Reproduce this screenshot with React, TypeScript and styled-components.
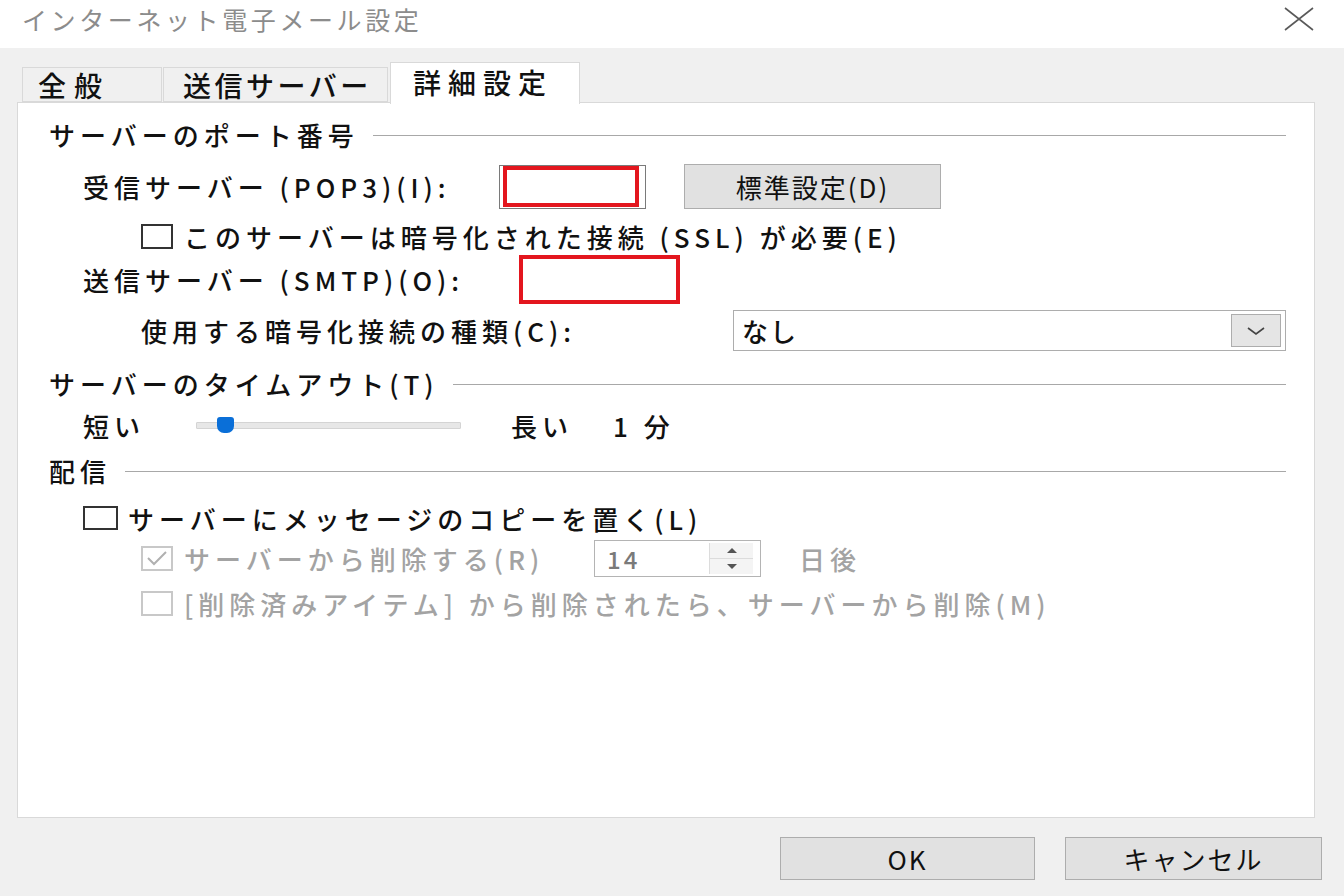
import React from "react";
import styled, { createGlobalStyle } from "styled-components";

const GlobalStyle = createGlobalStyle`
  html, body { margin: 0; padding: 0; }
  body {
    background: #f0f0f0;
    font-family: "Noto Sans CJK JP", "Noto Sans", sans-serif;
    color: #111;
  }
  * { box-sizing: border-box; }
`;

const Window = styled.div`
  width: 1344px;
  height: 896px;
  display: flex;
  flex-direction: column;
  background: #f0f0f0;
  overflow: hidden;
`;

const TitleBar = styled.div`
  height: 48px;
  background: #ffffff;
  display: flex;
  align-items: center;
  justify-content: space-between;
  padding: 0 30px 10px 22px;
`;

const Title = styled.div`
  font-size: 25px;
  letter-spacing: 3.6px;
  color: #8c8c8c;
  line-height: 1;
`;

const CloseIcon = styled.svg`
  width: 30px;
  height: 24px;
  display: block;
`;

const Body = styled.div`
  flex: 1;
  display: flex;
  flex-direction: column;
  padding: 14px 29px 0 17px;
`;

const TabStrip = styled.div`
  display: flex;
  align-items: flex-end;
  height: 40px;
  padding-left: 5px;
  position: relative;
  z-index: 1;
`;

const Tab = styled.div<{ $w: number; $ls: number; $pl: number; $active?: boolean }>`
  width: ${(p) => p.$w}px;
  height: ${(p) => (p.$active ? 42 : 35)}px;
  margin-bottom: ${(p) => (p.$active ? -2 : 0)}px;
  margin-left: ${(p) => (p.$active ? 2 : 1)}px;
  background: ${(p) => (p.$active ? "#ffffff" : "#f0f0f0")};
  border: 1px solid #d9d9d9;
  border-bottom: ${(p) => (p.$active ? "none" : "1px solid #d9d9d9")};
  display: flex;
  align-items: center;
  justify-content: flex-start;
  padding-left: ${(p) => p.$pl}px;
  font-size: 28px;
  font-weight: 500;
  letter-spacing: ${(p) => p.$ls}px;
  color: #111;
  padding-bottom: ${(p) => (p.$active ? 4 : 0)}px;
  white-space: nowrap;
  &:first-child { margin-left: 0; }
`;

const Panel = styled.div`
  height: 716px;
  background: #ffffff;
  border: 1px solid #d9d9d9;
  padding: 13px 28px 0 31px;
  display: flex;
  flex-direction: column;
`;

const SectionHeader = styled.div<{ $mt: number }>`
  height: 36px;
  margin-top: ${(p) => p.$mt}px;
  display: flex;
  align-items: center;
  gap: 14px;
  font-size: 26px;
  font-weight: 500;
  letter-spacing: 5px;
  white-space: nowrap;
`;

const Rule = styled.div`
  flex: 1;
  height: 1px;
  background: #a8a8a8;
  margin-top: 2px;
`;

const Row = styled.div<{ $mt: number; $h: number; $indent: number; $disabled?: boolean }>`
  height: ${(p) => p.$h}px;
  margin-top: ${(p) => p.$mt}px;
  padding-left: ${(p) => p.$indent}px;
  display: flex;
  align-items: center;
  font-size: 26px;
  font-weight: 500;
  letter-spacing: 5px;
  white-space: nowrap;
  color: ${(p) => (p.$disabled ? "#a3a3a3" : "#111")};
`;

const Label = styled.div<{ $w?: number }>`
  width: ${(p) => (p.$w ? `${p.$w}px` : "auto")};
  flex-shrink: 0;
`;

const TextBox = styled.div`
  width: 147px;
  height: 44px;
  border: 1px solid #7a7a7a;
  background: #fff;
  padding: 0 6px 2px 3px;
  display: flex;
`;

const RedMark = styled.div<{ $w: number; $h: number }>`
  width: ${(p) => p.$w}px;
  height: ${(p) => p.$h}px;
  border: 4px solid #e3161e;
  flex-shrink: 0;
`;

const Button = styled.div<{ $w: number; $h: number }>`
  width: ${(p) => p.$w}px;
  height: ${(p) => p.$h}px;
  background: #e1e1e1;
  border: 1px solid #adadad;
  display: flex;
  align-items: center;
  justify-content: center;
  font-size: 26px;
  font-weight: 400;
  letter-spacing: 2px;
  color: #111;
  flex-shrink: 0;
`;

const CheckBox = styled.div<{ $w: number; $h: number; $disabled?: boolean }>`
  width: ${(p) => p.$w}px;
  height: ${(p) => p.$h}px;
  border: 2px solid ${(p) => (p.$disabled ? "#c8c8c8" : "#333333")};
  background: #fff;
  flex-shrink: 0;
  display: flex;
  align-items: center;
  justify-content: center;
  margin-right: ${(p) => (p.$w > 33 ? 10 : 11)}px;
`;

const Select = styled.div`
  width: 558px;
  height: 41px;
  border: 1px solid #adadad;
  background: #fff;
  display: flex;
  align-items: center;
  justify-content: space-between;
  padding: 0 4px 0 8px;
  font-size: 26px;
  letter-spacing: 2px;
`;

const SelectArrow = styled.div`
  width: 50px;
  height: 33px;
  background: #e5e5e5;
  border: 1px solid #adadad;
  display: flex;
  align-items: center;
  justify-content: center;
`;

const SliderTrack = styled.div`
  width: 265px;
  height: 7px;
  margin-right: 50px;
  background: #e7e7e7;
  border: 1px solid #d4d4d4;
  border-radius: 1px;
  position: relative;
`;

const SliderThumb = styled.div`
  position: absolute;
  left: 20px;
  top: -6px;
  width: 17px;
  height: 16px;
  background: #0a6fd8;
  border-radius: 3px 3px 7px 7px;
`;

const Spinner = styled.div`
  width: 167px;
  height: 37px;
  margin-right: 38px;
  border: 1px solid #b4b4b4;
  background: #fff;
  display: flex;
  align-items: center;
  justify-content: space-between;
  padding: 2px 7px 2px 12px;
  font-size: 24px;
  letter-spacing: 3px;
  color: #7a7a7a;
`;

const SpinButtons = styled.div`
  width: 44px;
  height: 100%;
  display: flex;
  flex-direction: column;
  border-left: 1px solid #dcdcdc;
`;

const SpinHalf = styled.div<{ $top?: boolean }>`
  flex: 1;
  display: flex;
  align-items: center;
  justify-content: center;
  background: #f4f4f4;
  border-bottom: ${(p) => (p.$top ? "1px solid #dcdcdc" : "none")};
`;

const Footer = styled.div`
  display: flex;
  justify-content: flex-end;
  gap: 30px;
  padding: 19px 0 0 0;
  margin-right: -7px;
`;

const Gap = styled.div<{ $w: number }>`
  width: ${(p) => p.$w}px;
  flex-shrink: 0;
`;

const Check = ({ color }: { color: string }) => (
  <svg width="22" height="16" viewBox="0 0 22 16">
    <path d="M2 8 L8 14 L20 2" fill="none" stroke={color} strokeWidth="2" />
  </svg>
);

export default function App() {
  return (
    <>
      <GlobalStyle />
      <Window>
        <TitleBar>
          <Title>インターネット電子メール設定</Title>
          <CloseIcon viewBox="0 0 30 24">
            <path d="M1 1 L29 23 M29 1 L1 23" stroke="#5a5a5a" strokeWidth="1.6" fill="none" />
          </CloseIcon>
        </TitleBar>
        <Body>
          <TabStrip>
            <Tab $w={140} $ls={8} $pl={15}>全般</Tab>
            <Tab $w={225} $ls={3.5} $pl={19}>送信サーバー</Tab>
            <Tab $w={190} $ls={7} $pl={22} $active>詳細設定</Tab>
          </TabStrip>
          <Panel>
            <SectionHeader $mt={0}>
              サーバーのポート番号
              <Rule />
            </SectionHeader>

            <Row $mt={12} $h={45} $indent={34}>
              <Label $w={416}>受信サーバー (POP3)(I):</Label>
              <TextBox>
                <RedMark $w={136} $h={41} />
              </TextBox>
              <Gap $w={38} />
              <Button $w={257} $h={45}>標準設定(D)</Button>
            </Row>

            <Row $mt={13} $h={28} $indent={92}>
              <CheckBox $w={32} $h={25} />
              <Label>このサーバーは暗号化された接続 (SSL) が必要(E)</Label>
            </Row>

            <Row $mt={3} $h={52} $indent={34}>
              <Label $w={436}>送信サーバー (SMTP)(O):</Label>
              <RedMark $w={161} $h={49} />
            </Row>

            <Row $mt={5} $h={41} $indent={92}>
              <Label $w={592}>使用する暗号化接続の種類(C):</Label>
              <Select>
                なし
                <SelectArrow>
                  <svg width="20" height="10" viewBox="0 0 20 10">
                    <path d="M2 2 L10 8 L18 2" fill="none" stroke="#444" strokeWidth="1.6" />
                  </svg>
                </SelectArrow>
              </Select>
            </Row>

            <SectionHeader $mt={14}>
              サーバーのタイムアウト(T)
              <Rule />
            </SectionHeader>

            <Row $mt={8} $h={32} $indent={34}>
              <Label $w={113}>短い</Label>
              <SliderTrack>
                <SliderThumb />
              </SliderTrack>
              <Label $w={102}>長い</Label>
              <Label>1 分</Label>
            </Row>

            <SectionHeader $mt={11}>
              配信
              <Rule />
            </SectionHeader>

            <Row $mt={15} $h={30} $indent={34}>
              <CheckBox $w={35} $h={24} />
              <Label>サーバーにメッセージのコピーを置く(L)</Label>
            </Row>

            <Row $mt={5} $h={40} $indent={92} $disabled>
              <CheckBox $w={32} $h={25} $disabled>
                <Check color="#b0b0b0" />
              </CheckBox>
              <Label $w={410}>サーバーから削除する(R)</Label>
              <Spinner>
                14
                <SpinButtons>
                  <SpinHalf $top>
                    <svg width="12" height="7" viewBox="0 0 12 7"><path d="M1 6 L6 1 L11 6 Z" fill="#555" /></svg>
                  </SpinHalf>
                  <SpinHalf>
                    <svg width="12" height="7" viewBox="0 0 12 7"><path d="M1 1 L6 6 L11 1 Z" fill="#555" /></svg>
                  </SpinHalf>
                </SpinButtons>
              </Spinner>
              <Label>日後</Label>
            </Row>

            <Row $mt={10} $h={30} $indent={92} $disabled>
              <CheckBox $w={32} $h={25} $disabled />
              <Label>[削除済みアイテム] から削除されたら、サーバーから削除(M)</Label>
            </Row>
          </Panel>
          <Footer>
            <Button $w={255} $h={43}>OK</Button>
            <Button $w={257} $h={43}>キャンセル</Button>
          </Footer>
        </Body>
      </Window>
    </>
  );
}
